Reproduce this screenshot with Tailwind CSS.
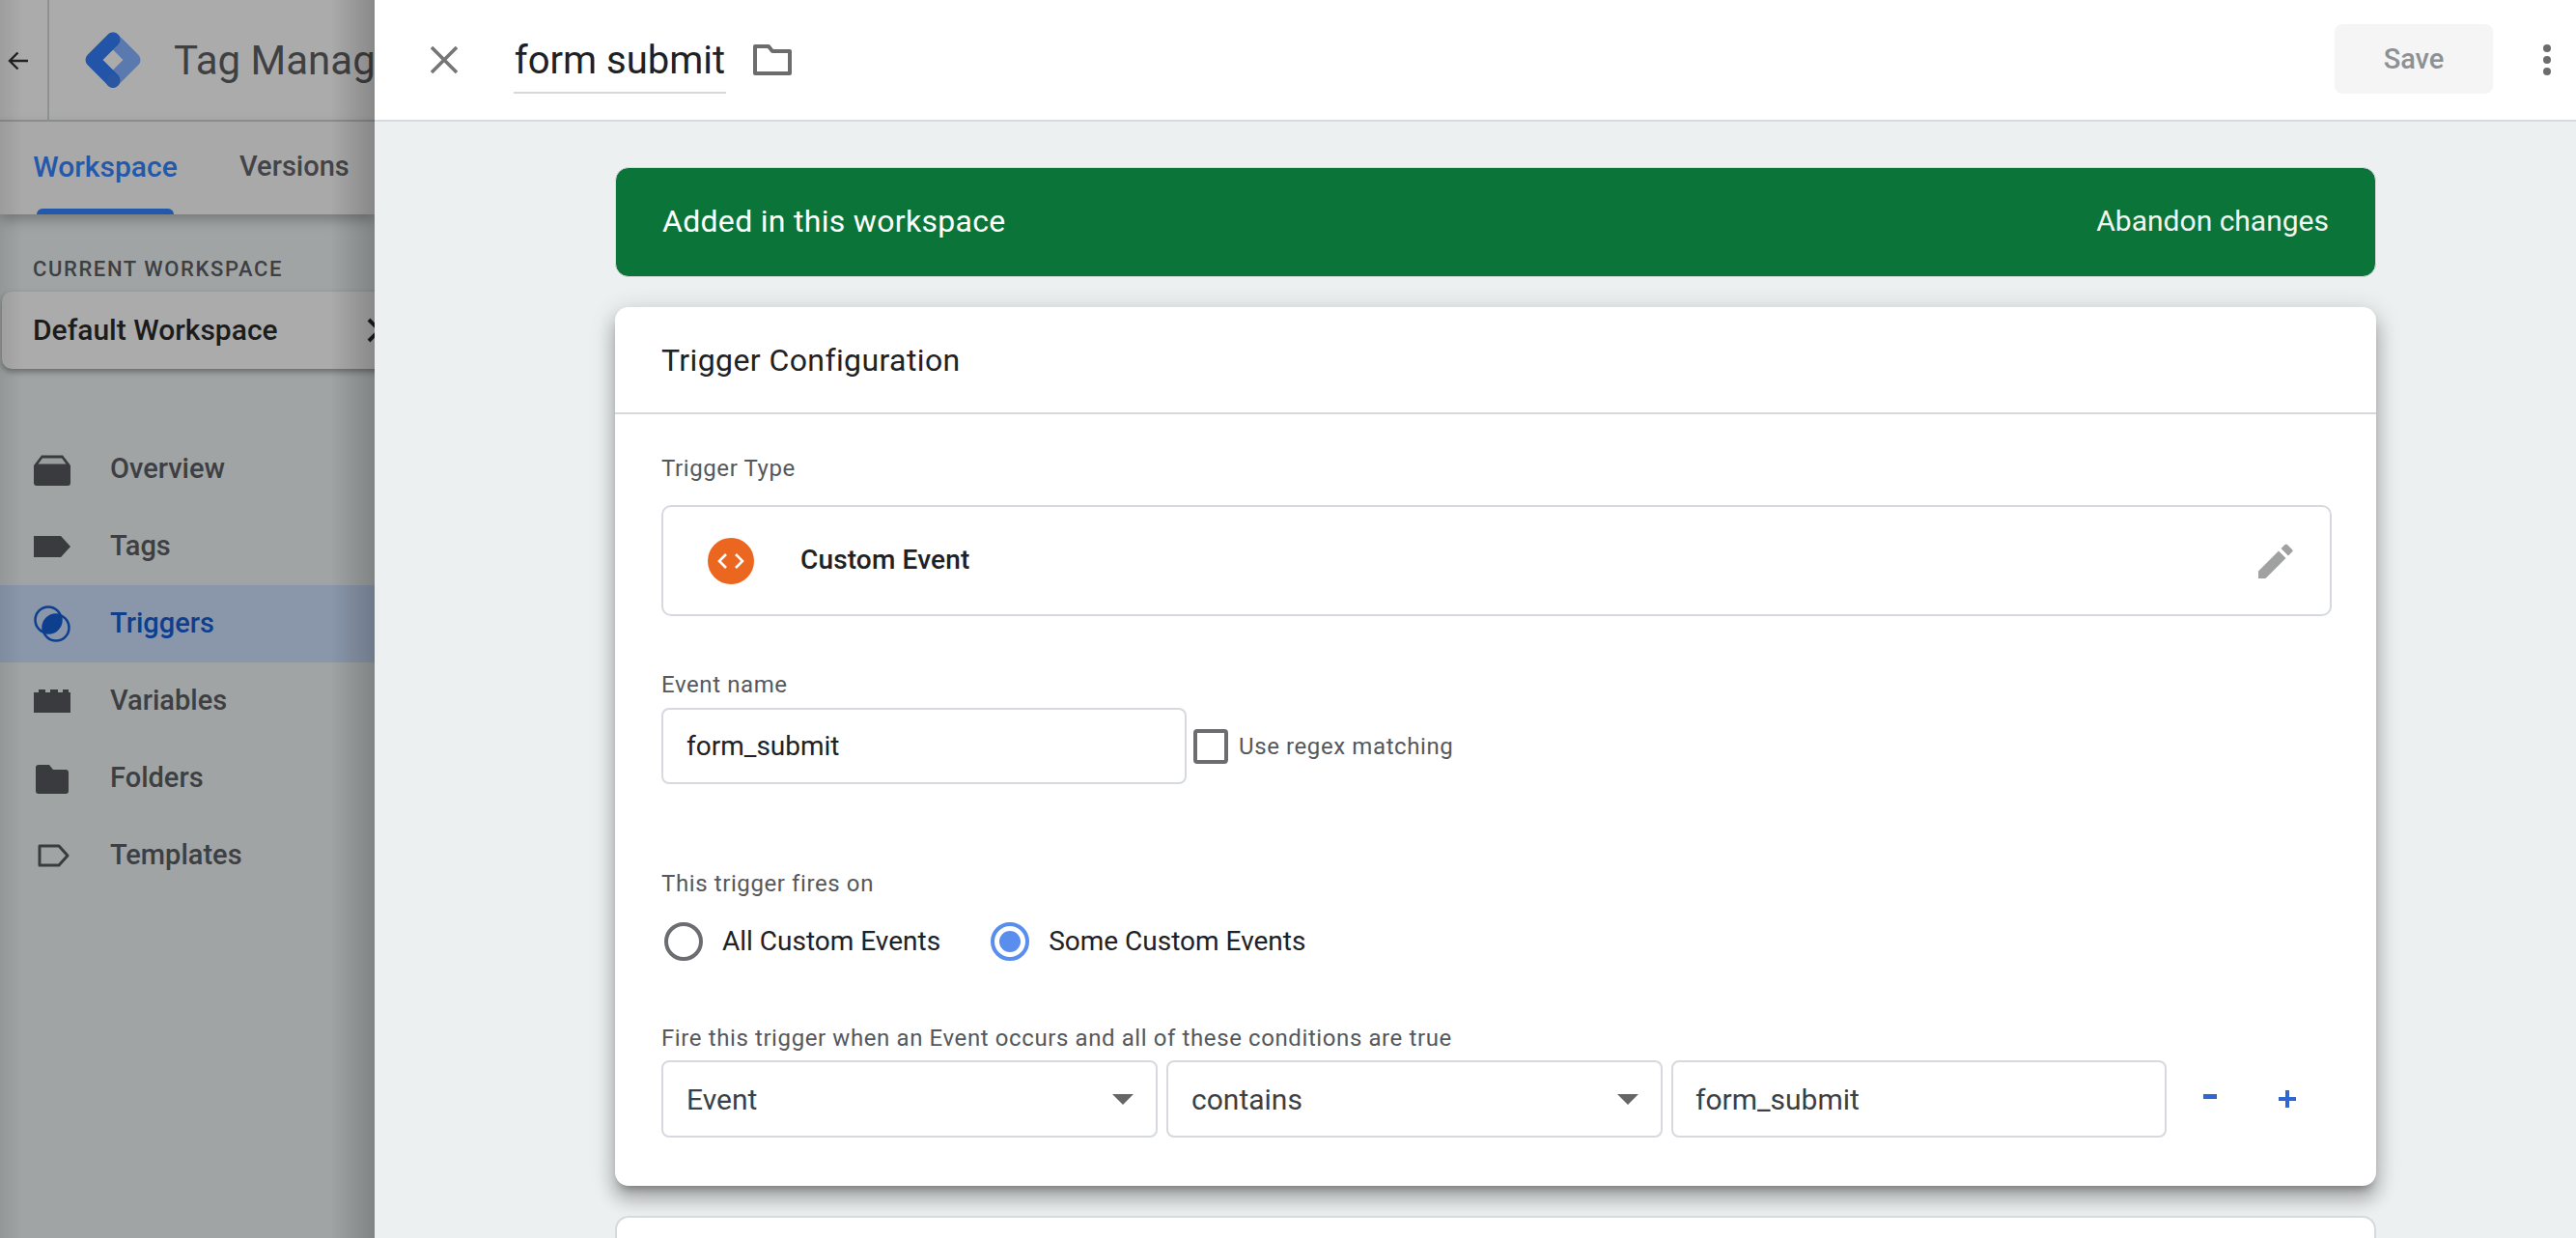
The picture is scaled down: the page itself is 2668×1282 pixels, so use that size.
<!DOCTYPE html>
<html lang="en">
<head>
    <meta charset="UTF-8">
    <title>Tag Manager - form submit</title>
    <script src="https://cdn.jsdelivr.net/npm/@tailwindcss/browser@4"></script>
</head>
<body class="overflow-hidden bg-[#edf0f1] font-[Roboto,sans-serif]">
    <div class="flex h-[1282px] w-[2668px] overflow-hidden">

        <!-- Dimmed sidebar -->
        <aside class="relative w-[388px] shrink-0 overflow-hidden bg-[#a0a4a4]">
            <div class="flex h-[126px] items-center border-b-2 border-[#8f9292] bg-[#ababab]">
                <div class="flex h-full w-[51px] shrink-0 items-center border-r-2 border-[#8f9292] pl-2">
                    <svg class="mt-[2px] h-[22px] w-[22px]" viewBox="0 0 22 22" fill="none" stroke="#222" stroke-width="2.4"><path d="M21 11H2M10.5 2.5 2 11l8.5 8.5"/></svg>
                </div>
                <svg class="ml-9 h-[60px] w-[60px] shrink-0" viewBox="0 0 60 60" fill="none" stroke-width="15" stroke-linecap="round" stroke-linejoin="round">
                    <path d="M30 9 51 30 30 51" stroke="#5a7aaf"/>
                    <path d="M30 9 9 30 30 51" stroke="#2254a8"/>
                    <circle cx="30" cy="52" r="7" fill="#2a57a0" stroke="none"/>
                </svg>
                <span class="ml-[33px] mt-[2px] whitespace-nowrap text-[42px] leading-none text-[#3f4042]">Tag Manager</span>
            </div>

            <div class="relative flex h-[96px] bg-[#a9a9a9] shadow-[0_6px_12px_rgba(0,0,0,0.25)]">
                <div class="relative ml-[35px] flex w-[148px] items-center justify-center pb-[4px] text-[30px] font-medium whitespace-nowrap text-[#2358ab]">
                    Workspace
                    <div class="absolute bottom-0 left-[3px] right-[3px] h-[6px] rounded-t-md bg-[#2358ab]"></div>
                </div>
                <div class="ml-[65px] flex items-center pb-[2px] text-[29px] font-medium text-[#434447]">Versions</div>
            </div>

            <div class="pt-[46px]">
                <div class="pl-[34px] text-[22px] font-medium leading-[22px] tracking-[1.6px] text-[#3e3f42]">CURRENT WORKSPACE</div>
                <div class="ml-[2px] mt-[12px] flex h-[80px] w-[420px] items-center rounded-[10px] bg-[#ababab] pl-[32px] shadow-[0_3px_6px_rgba(0,0,0,0.35)]">
                    <span class="mb-[2px] w-[346px] text-[30px] font-medium text-[#1c1c1c]">Default Workspace</span>
                    <svg class="h-[26px] w-[16px]" viewBox="0 0 16 26" fill="none" stroke="#1c1c1c" stroke-width="4"><path d="M2 2l11 11L2 24"/></svg>
                </div>
            </div>

            <nav class="mt-[64px] text-[29px] font-medium text-[#3e3f42]">
                <div class="flex h-[80px] items-center pl-[35px]">
                    <svg class="h-[38px] w-[38px]" viewBox="0 0 38 38" fill="#3a3b3e"><path d="M8 4.500h22l8 10.500V33a3 3 0 0 1-3 3H3a3 3 0 0 1-3-3V15z"/><path d="M9 7.500 4.500 13.500h29L29 7.500z" fill="#9a9e9e"/></svg>
                    <span class="ml-[41px]">Overview</span>
                </div>
                <div class="flex h-[80px] items-center pl-[35px]">
                    <svg class="h-[38px] w-[38px]" viewBox="0 0 38 38" fill="#3a3b3e"><path d="M0 8h28l10 11-10 11H0z"/></svg>
                    <span class="ml-[41px]">Tags</span>
                </div>
                <div class="flex h-[80px] items-center bg-[#8a97ab] pl-[35px] text-[#0e3f8f]">
                    <svg class="h-[38px] w-[38px]" viewBox="0 0 38 38" fill="none" stroke="#0e3f8f" stroke-width="2.500"><circle cx="15" cy="15" r="13.500"/><circle cx="23" cy="23" r="13.500"/><path d="M27.670 10.330A13.500 13.500 0 0 1 10.330 27.670 13.500 13.500 0 0 1 27.670 10.330z" fill="#0e3f8f" stroke="none"/></svg>
                    <span class="ml-[41px]">Triggers</span>
                </div>
                <div class="flex h-[80px] items-center pl-[35px]">
                    <svg class="h-[38px] w-[38px]" viewBox="0 0 38 38" fill="#3a3b3e"><path d="M0 10h5V7h7v3h5V7h8v3h5V7h6v3h2v21H0z"/></svg>
                    <span class="ml-[41px]">Variables</span>
                </div>
                <div class="flex h-[80px] items-center pl-[35px]">
                    <svg class="h-[38px] w-[38px]" viewBox="0 0 38 38" fill="#3a3b3e"><path d="M5 5h11l4 5h13a3 3 0 0 1 3 3v19a3 3 0 0 1-3 3H5a3 3 0 0 1-3-3V8a3 3 0 0 1 3-3z"/></svg>
                    <span class="ml-[41px]">Folders</span>
                </div>
                <div class="flex h-[80px] items-center pl-[35px]">
                    <svg class="h-[38px] w-[38px]" viewBox="0 0 38 38" fill="none" stroke="#3a3b3e" stroke-width="3" stroke-linejoin="round"><path d="M6 9h20l9 10-9 10H6z"/></svg>
                    <span class="ml-[41px]">Templates</span>
                </div>
            </nav>

            <!-- side shading of the drawer over the sidebar -->
            <div class="pointer-events-none absolute inset-y-0 right-0 w-[46px] bg-linear-to-l from-black/20 to-transparent"></div>
            <div class="pointer-events-none absolute inset-y-0 left-0 w-[24px] bg-linear-to-r from-black/8 to-transparent"></div>
        </aside>

        <!-- Trigger editor drawer -->
        <main class="min-w-0 flex-1">
            <header class="flex h-[126px] items-center border-b-2 border-[#d8dadd] bg-white">
                <svg class="ml-[58px] h-[28px] w-[28px]" viewBox="0 0 28 28" fill="none" stroke="#757575" stroke-width="3.600"><path d="M1 1l26 26M27 1 1 27"/></svg>
                <div class="ml-[58px] h-[70px] w-[220px] border-b-2 border-[#d6d8db] pt-[11px] text-center text-[40px] leading-[50px] text-[#202124]">form submit</div>
                <svg class="ml-[28px] h-[34px] w-[40px]" viewBox="0 0 40 34" fill="none" stroke="#6a6c6e" stroke-width="4" stroke-linejoin="round"><path d="M2 31V3h14l4 5h18v23z"/></svg>
                <button class="mb-[3px] ml-auto h-[72px] w-[164px] rounded-lg bg-[#f5f5f5] pt-[2px] text-[29px] font-medium text-[#8e9194]">Save</button>
                <div class="ml-[52px] mr-[26px] flex flex-col gap-[4px]">
                    <span class="h-[8px] w-[8px] rounded-full bg-[#6a6c6e]"></span>
                    <span class="h-[8px] w-[8px] rounded-full bg-[#6a6c6e]"></span>
                    <span class="h-[8px] w-[8px] rounded-full bg-[#6a6c6e]"></span>
                </div>
            </header>

            <div class="ml-[249px] w-[1824px] pt-[47px]">
                <div class="flex h-[114px] items-center justify-between rounded-[14px] border border-[#d8dadd] bg-[#0b7539] px-[48px] pb-[3px] text-white">
                    <span class="text-[32px] tracking-[0.3px]">Added in this workspace</span>
                    <span class="text-[30px] text-[#f1f5f2]">Abandon changes</span>
                </div>

                <section class="mt-[31px] h-[910px] rounded-[14px] bg-white shadow-[0_14px_18px_2px_rgba(0,0,0,0.2),0_5px_24px_4px_rgba(0,0,0,0.12),0_8px_8px_-5px_rgba(0,0,0,0.3)]">
                    <div class="flex h-[111px] items-center border-b-2 border-[#d6d8db] pl-[48px] text-[32px] tracking-[0.4px] text-[#202124]">Trigger Configuration</div>

                    <div class="px-[48px]">
                        <div class="pt-[42px] text-[24px] leading-[28px] tracking-[0.6px] text-[#55585c]">Trigger Type</div>
                        <div class="mt-[24px] flex h-[115px] w-[1730px] items-center rounded-[10px] border-2 border-[#d6d9dd] pl-[46px]">
                            <span class="flex h-[48px] w-[48px] items-center justify-center rounded-full bg-[#eb6720]">
                                <svg class="h-[16px] w-[28px]" viewBox="0 0 28 16" fill="none" stroke="#fff" stroke-width="2.600"><path d="M9 1 2 8l7 7M19 1l7 7-7 7"/></svg>
                            </span>
                            <span class="mb-[2px] ml-[48px] text-[28px] font-medium tracking-[0.15px] text-[#202124]">Custom Event</span>
                            <svg class="ml-auto mr-[38px] h-[36px] w-[36px]" viewBox="0 0 36 36" fill="#a0a2a1"><path d="M0 28.500 21 7.500l7.500 7.500L7.500 36H0zM23.500 5l4-4a1.800 1.800 0 0 1 2.500 0l5 5a1.800 1.800 0 0 1 0 2.500l-4 4z"/></svg>
                        </div>

                        <div class="pt-[57px] text-[24px] leading-[28px] tracking-[0.6px] text-[#55585c]">Event name</div>
                        <div class="mt-[10px] flex items-center">
                            <div class="flex h-[79px] w-[544px] items-center rounded-lg border-2 border-[#d6d9dd] pl-[24px] text-[28px] text-[#202124]">form_submit</div>
                            <span class="ml-[7px] h-[36px] w-[36px] rounded-[4px] border-[4px] border-[#6b6d70]"></span>
                            <span class="ml-[11px] text-[24px] tracking-[0.6px] text-[#55585c]">Use regex matching</span>
                        </div>

                        <div class="pt-[89px] text-[24px] leading-[28px] tracking-[0.6px] text-[#55585c]">This trigger fires on</div>
                        <div class="mt-[26px] flex h-[40px] items-center pl-[3px] text-[28px] text-[#202124]">
                            <span class="h-[40px] w-[40px] rounded-full border-[4px] border-[#6b6d70]"></span>
                            <span class="ml-[20px]">All Custom Events</span>
                            <span class="ml-[52px] flex h-[40px] w-[40px] items-center justify-center rounded-full border-[4px] border-[#5a8eee]">
                                <span class="h-[22px] w-[22px] rounded-full bg-[#5a8eee]"></span>
                            </span>
                            <span class="ml-[20px]">Some Custom Events</span>
                        </div>

                        <div class="pt-[66px] text-[24px] leading-[28px] tracking-[0.6px] text-[#55585c]">Fire this trigger when an Event occurs and all of these conditions are true</div>
                        <div class="mt-[9px] flex items-center gap-[9px] text-[30px] text-[#3c4043]">
                            <div class="flex h-[80px] w-[514px] items-center justify-between rounded-lg border-2 border-[#d6d9dd] pl-[24px] pr-[23px]">
                                Event
                                <span class="h-0 w-0 border-x-[11px] border-t-[11px] border-x-transparent border-t-[#666]"></span>
                            </div>
                            <div class="flex h-[80px] w-[514px] items-center justify-between rounded-lg border-2 border-[#d6d9dd] pl-[24px] pr-[23px]">
                                contains
                                <span class="h-0 w-0 border-x-[11px] border-t-[11px] border-x-transparent border-t-[#666]"></span>
                            </div>
                            <div class="flex h-[80px] w-[513px] items-center rounded-lg border-2 border-[#d6d9dd] pl-[23px]">form_submit</div>
                            <svg class="ml-[28px] h-[20px] w-[16px]" viewBox="0 0 16 20" fill="#2f66d0"><rect x="1" y="5" width="14" height="5"/></svg>
                            <svg class="ml-[53px] h-[20px] w-[20px]" viewBox="0 0 20 20" fill="#2f66d0"><path d="M8 1h4v7h7v4h-7v7H8v-7H1V8h7z"/></svg>
                        </div>
                    </div>
                </section>

                <section class="mt-[31px] h-[60px] rounded-t-[14px] border-2 border-[#d6d9dd] bg-white"></section>
            </div>
        </main>
    </div>
</body>
</html>
